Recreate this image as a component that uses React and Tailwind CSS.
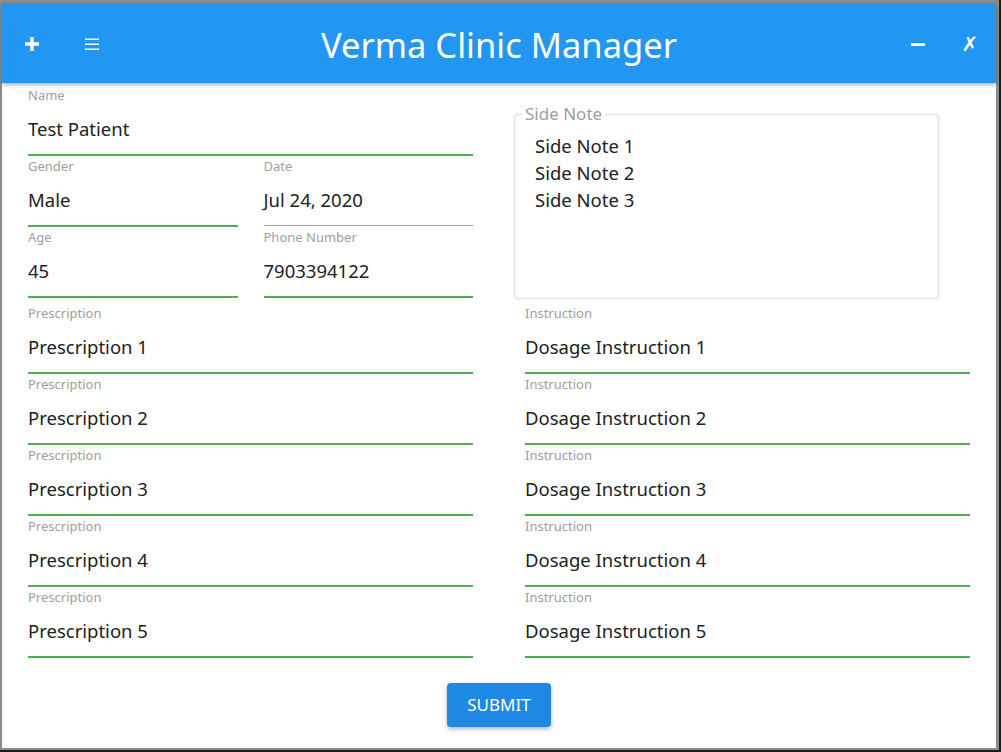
import React from "react";

const prescriptions = [1, 2, 3, 4, 5];

function Field({ label, value, focused = true }) {
  return (
    <div className="flex flex-col">
      <span className="text-[13px] leading-[16px] text-[#9e9e9e]">{label}</span>
      <span className="mt-[14px] text-[18.5px] leading-[24px] text-[#212121]">{value}</span>
      {focused ? (
        <div className="mt-[13px] h-[2px] bg-[#4caf50]" />
      ) : (
        <div className="mt-[13px] h-[1px] mb-[1px] bg-[#9e9e9e]" />
      )}
    </div>
  );
}

function PlusIcon() {
  return (
    <svg width="14" height="14" viewBox="0 0 14 14">
      <path d="M5.3 0h3.4v5.3H14v3.4H8.7V14H5.3V8.7H0V5.3h5.3z" fill="white" />
    </svg>
  );
}

function MenuIcon() {
  return (
    <svg width="14" height="12" viewBox="0 0 14 12">
      <rect x="0" y="0.5" width="14" height="1.5" fill="white" />
      <rect x="0" y="5.5" width="14" height="1.5" fill="white" />
      <rect x="0" y="10.5" width="14" height="1.5" fill="white" />
    </svg>
  );
}

export default function App() {
  return (
    <div
      className="w-[1001px] h-[752px] bg-[#1c1c1c] pr-[2px] pb-[2px]"
      style={{ fontFamily: '"Noto Sans", "Open Sans", sans-serif' }}
    >
      <div className="h-full flex flex-col bg-white border-t-[3px] border-l-2 border-r-[3px] border-b-2 border-[#8c8c8c]">
        <header className="relative z-10 h-[80px] shrink-0 pt-[2px] bg-[#2196f3] grid grid-cols-[1fr_auto_1fr] items-center shadow-[0_2px_4px_rgba(0,0,0,0.3)]">
          <div className="flex items-center pl-[10px] gap-[20px]">
            <button className="w-[40px] h-[40px] flex items-center justify-center">
              <PlusIcon />
            </button>
            <button className="w-[40px] h-[40px] flex items-center justify-center">
              <MenuIcon />
            </button>
          </div>
          <h1 className="mt-[2px] text-[34.5px] leading-[46px] text-white">Verma Clinic Manager</h1>
          <div className="flex items-center justify-end pr-[6px] gap-[12px]">
            <button className="w-[40px] h-[40px] flex items-center justify-center">
              <span className="block w-[14px] h-[3px] bg-white" />
            </button>
            <button
              className="w-[40px] h-[40px] flex items-center justify-center text-white text-[20px] font-bold"
              style={{ fontFamily: '"DejaVu Sans", sans-serif' }}
            >
              ✗
            </button>
          </div>
        </header>

        <main className="flex-1 px-[26px] pt-[4px] flex flex-col">
          <div className="flex gap-[52px]">
            <div className="w-[445px] flex flex-col gap-[2px]">
              <Field label="Name" value="Test Patient" />
              <div className="grid grid-cols-2 gap-x-[26px]">
                <Field label="Gender" value="Male" />
                <Field label="Date" value="Jul 24, 2020" focused={false} />
              </div>
              <div className="grid grid-cols-2 gap-x-[26px]">
                <Field label="Age" value="45" />
                <Field label="Phone Number" value="7903394122" />
              </div>
            </div>
            <div className="w-[445px]">
              <fieldset className="-ml-[12px] mt-[17px] w-[427px] h-[196px] border-[3px] border-[#eeeeee] rounded-[5px]">
                <legend className="ml-[6px] px-[3px] text-[17px] leading-[20px] text-[#9e9e9e]">Side Note</legend>
                <div className="pl-[19px] pt-[8px] text-[18.5px] leading-[27px] text-[#212121]">
                  <p>Side Note 1</p>
                  <p>Side Note 2</p>
                  <p>Side Note 3</p>
                </div>
              </fieldset>
            </div>
          </div>

          <div className="mt-[5px] grid grid-cols-2 gap-x-[52px] gap-y-[2px]">
            {prescriptions.map((n) => (
              <React.Fragment key={n}>
                <Field label="Prescription" value={`Prescription ${n}`} />
                <Field label="Instruction" value={`Dosage Instruction ${n}`} />
              </React.Fragment>
            ))}
          </div>

          <div className="flex justify-center mt-[25px]">
            <button className="w-[104px] h-[44px] rounded-[4px] bg-[#1e88e5] text-white text-[17px] shadow-[0_2px_4px_rgba(0,0,0,0.3)]">
              SUBMIT
            </button>
          </div>
        </main>
      </div>
    </div>
  );
}
